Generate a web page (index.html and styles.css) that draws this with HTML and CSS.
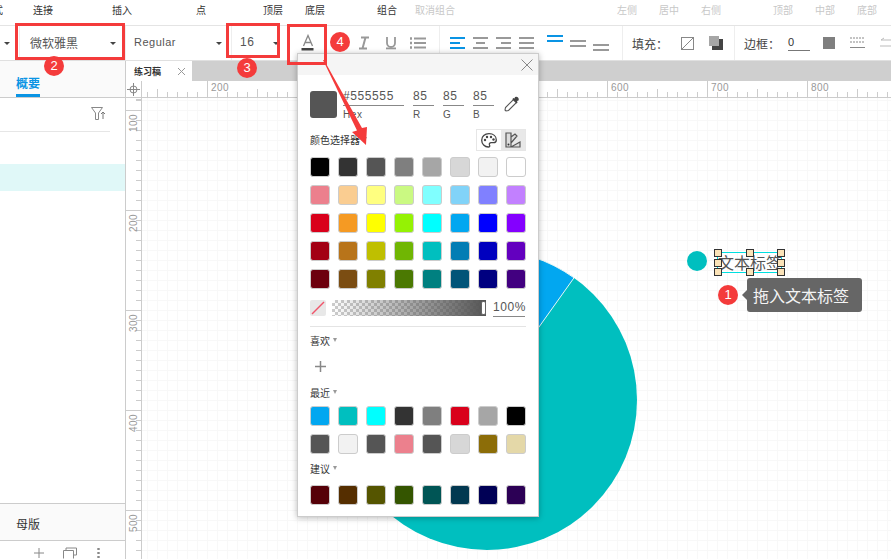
FILE: index.html
```html
<!DOCTYPE html>
<html lang="zh-CN">
<head>
  <meta charset="UTF-8">
  <title>文本标签</title>
  <meta name="viewport" content="width=device-width, initial-scale=1.0">
  <link rel="stylesheet" href="styles.css">
</head>
<body>
<div class="app">

  <div class="menu-row">
    <span class="menu-item w-cut">式</span>
    <span class="menu-item m-33">连接</span>
    <span class="menu-item m-59">插入</span>
    <span class="menu-item m-64">点</span>
    <span class="menu-item m-57">顶层</span>
    <span class="menu-item m-22">底层</span>
    <span class="menu-item m-52">组合</span>
    <span class="menu-item m-18 off">取消组合</span>
    <span class="menu-item m-162 off">左侧</span>
    <span class="menu-item m-22 off">居中</span>
    <span class="menu-item m-22 off">右侧</span>
    <span class="menu-item m-52 off">顶部</span>
    <span class="menu-item m-22 off">中部</span>
    <span class="menu-item m-22 off">底部</span>
  </div>

  <div class="format-row">
    <div class="select sel-first"><i class="caret"></i></div>
    <div class="select sel-font"><span>微软雅黑</span><i class="caret"></i></div>
    <div class="select sel-weight"><span>Regular</span><i class="caret"></i></div>
    <div class="select sel-size"><span>16</span><i class="caret"></i></div>
    <div class="text-tools">
      <svg class="ico" width="16" height="18" viewBox="0 0 16 18"><path d="M3.5 12 8 1.5 12.500 12M5 8.500h6" fill="none" stroke="#888" stroke-width="1.300"/><rect x="1.500" y="14" width="12" height="2.500" fill="#444"/></svg>
      <svg class="ico" width="14" height="14" viewBox="0 0 14 14"><path d="M3 1h5a3 3 0 0 1 0 6H3zM3 7h6a3 3 0 0 1 0 6H3z" fill="#999"/></svg>
      <svg class="ico" width="12" height="14" viewBox="0 0 12 14"><path d="M3 1.500h8M1 12.500h8M7.500 1.500l-3 11" fill="none" stroke="#999" stroke-width="2"/></svg>
      <svg class="ico" width="14" height="14" viewBox="0 0 14 14"><path d="M3 1v6a4 4 0 0 0 8 0V1" fill="none" stroke="#999" stroke-width="1.800"/><rect x="2" y="11.500" width="10" height="1.800" fill="#999"/></svg>
      <svg class="ico" width="17" height="14" viewBox="0 0 17 14"><path d="M5 2.500h12M5 7h12M5 11.500h12" stroke="#999" stroke-width="1.800"/><path d="M1 2.500h2M1 7h2M1 11.500h2" stroke="#999" stroke-width="2.400"/></svg>
    </div>
    <div class="align-tools">
      <svg width="15" height="12" viewBox="0 0 15 12"><path d="M0 1h15M0 6h10M0 11h15" stroke="#0a94e4" stroke-width="2"/></svg>
      <svg width="15" height="12" viewBox="0 0 15 12"><path d="M0 1h15M3 6h9M0 11h15" stroke="#999" stroke-width="2"/></svg>
      <svg width="15" height="12" viewBox="0 0 15 12"><path d="M0 1h15M5 6h10M0 11h15" stroke="#999" stroke-width="2"/></svg>
      <svg width="15" height="12" viewBox="0 0 15 12"><path d="M0 1h15M0 6h15M0 11h15" stroke="#999" stroke-width="2"/></svg>
    </div>
    <div class="valign-tools">
      <svg class="v-top" width="16" height="7" viewBox="0 0 16 7"><path d="M0 1h16M0 6h16" stroke="#0a94e4" stroke-width="2"/></svg>
      <svg class="v-mid" width="16" height="7" viewBox="0 0 16 7"><path d="M0 1h16M0 6h16" stroke="#999" stroke-width="2"/></svg>
      <svg class="v-bot" width="16" height="7" viewBox="0 0 16 7"><path d="M0 1h16M0 6h16" stroke="#999" stroke-width="2"/></svg>
    </div>
    <div class="fill-tools">
      <span class="tool-label">填充：</span>
      <svg class="fill-none" width="13" height="13" viewBox="0 0 13 13"><rect x=".5" y=".5" width="12" height="12" fill="#fff" stroke="#888"/><path d="M1 12 12 1" stroke="#888"/></svg>
      <svg class="fill-shadow" width="14" height="14" viewBox="0 0 14 14"><rect x="3" y="3" width="11" height="11" fill="#444"/><rect width="10" height="10" fill="#a6a6a6"/></svg>
    </div>
    <div class="border-tools">
      <span class="tool-label">边框：</span>
      <span class="border-num">0</span>
      <span class="border-swatch"></span>
      <svg class="border-dash" width="15" height="12" viewBox="0 0 15 12"><path d="M0 1h15M0 5h15" stroke="#888" stroke-dasharray="2 1"/><path d="M0 10.500h15" stroke="#888"/></svg>
      <svg class="border-arrow" width="15" height="12" viewBox="0 0 15 12"><path d="M15 3H1l3-2M0 9h14l-3 2" fill="none" stroke="#bbb"/></svg>
    </div>
  </div>

  <div class="work">
    <aside class="side">
      <div class="side-tabs"><span class="side-tab">概要</span></div>
      <div class="side-filter">
        <svg width="15" height="13" viewBox="0 0 15 13"><path d="M.5.500h11L7.500 6v6.500h-3V6z" fill="none" stroke="#888"/><path d="M12 12V5M10 7l2-2 2 2" fill="none" stroke="#777"/></svg>
      </div>
      <div class="side-selected"></div>
      <div class="side-spacer"></div>
      <div class="side-master">母版</div>
      <div class="side-foot">
        <svg width="10" height="10" viewBox="0 0 10 10"><path d="M5 0v10M0 5h10" stroke="#888"/></svg>
        <svg width="14" height="12" viewBox="0 0 14 12"><path d="M.5 11.500v-8h10v8M3 3V1h10.500v7H11" fill="none" stroke="#888"/></svg>
        <svg width="3" height="10" viewBox="0 0 3 10"><path d="M1.500 0v2M1.500 4v2M1.500 8v2" stroke="#888" stroke-width="2.400"/></svg>
      </div>
    </aside>

    <main class="stage">
      <div class="doc-tabs">
        <div class="doc-tab"><span>练习稿</span><svg width="9" height="9" viewBox="0 0 9 9"><path d="M1 1l7 7M8 1 1 8" stroke="#999"/></svg></div>
      </div>
      <div class="ruler-top">
        <div class="ruler-corner">
          <svg width="13" height="13" viewBox="0 0 13 13"><circle cx="6.500" cy="6.500" r="3.500" fill="none" stroke="#888"/><path d="M6.500 0v13M0 6.500h13" stroke="#888"/></svg>
        </div>
        <div class="ruler-x">
          <span>200</span><span></span><span></span><span></span><span>600</span><span>700</span><span>800</span>
        </div>
      </div>
      <div class="stage-body">
        <div class="ruler-y">
          <span><b>100</b></span><span><b>200</b></span><span><b>300</b></span><span><b>400</b></span><span><b>500</b></span>
        </div>
        <div class="canvas">
          <svg class="pie" width="300" height="300" viewBox="0 0 300 300">
            <circle cx="150" cy="150" r="150" fill="#00bfbf"/>
            <path d="M150 150V0A150 150 0 0 1 237 27.800Z" fill="#02a7f0" stroke="#e8f6f6"/>
          </svg>
          <span class="dot"></span>
          <div class="label-box">
            <span>文本标签</span>
            <i class="h h-tl"></i><i class="h h-tc"></i><i class="h h-tr"></i>
            <i class="h h-ml"></i><i class="h h-mr"></i>
            <i class="h h-bl"></i><i class="h h-bc"></i><i class="h h-br"></i>
          </div>
          <div class="tip">拖入文本标签</div>
        </div>
      </div>
    </main>
  </div>

  <div class="picker">
    <div class="picker-head">
      <svg width="12" height="12" viewBox="0 0 12 12"><path d="M.5.500l11 11M11.500.500l-11 11" stroke="#888"/></svg>
    </div>
    <div class="picker-body">
      <div class="value-row">
        <span class="current"></span>
        <div class="field f-hex"><span class="val">#555555</span><span class="cap">Hex</span></div>
        <div class="field"><span class="val">85</span><span class="cap">R</span></div>
        <div class="field"><span class="val">85</span><span class="cap">G</span></div>
        <div class="field"><span class="val">85</span><span class="cap">B</span></div>
        <svg class="dropper" width="18" height="18" viewBox="0 0 18 18"><path d="M9.500 5.500l3 3-8 8-2.500.5-1-1 .5-2.500z" fill="#fff" stroke="#555" stroke-width="1.100"/><path d="M8.500 5.500l4 4 1-1-.5-1.500 1.500-.5a2.600 2.600 0 0 0-3.500-3.500l-.5 1.500-1.500-.5z" fill="#444"/></svg>
      </div>

      <div class="title-row">
        <span class="sec-title">颜色选择器<i class="mini"></i></span>
        <div class="mode-switch">
          <span class="mode">
            <svg width="16" height="15" viewBox="0 0 16 15"><path d="M8 .700C3.700.700.700 3.500.700 7.200c0 3.800 3 6.800 6.600 6.800 1.500 0 1.700-1 1.200-2-.6-1.300.2-2.300 1.600-2.300h2.400c1.900 0 2.800-1.200 2.800-2.800C15.300 3.200 12.300.700 8 .700z" fill="none" stroke="#444" stroke-width="1.300"/><circle cx="4" cy="7" r="1.200" fill="#444"/><circle cx="6" cy="4" r="1.200" fill="#444"/><circle cx="10" cy="4" r="1.200" fill="#444"/><circle cx="12.500" cy="6.500" r="1.200" fill="#444"/></svg>
          </span>
          <span class="mode mode-on">
            <svg width="16" height="16" viewBox="0 0 16 16"><path d="M1 1h5v14H1zM6 5l4-3 2 2-6 7M6 15l9-5v5z" fill="#ddd" stroke="#555" stroke-width="1.200"/><circle cx="3.500" cy="12.500" r="1" fill="#333"/></svg>
          </span>
        </div>
      </div>

      <div class="swatches">
        <i class="s c-000"></i><i class="s c-333"></i><i class="s c-555"></i><i class="s c-7f7"></i><i class="s c-a6a"></i><i class="s c-d7d"></i><i class="s c-f2f"></i><i class="s c-fff"></i>
        <i class="s c-ec8"></i><i class="s c-fac"></i><i class="s c-ff8"></i><i class="s c-caf"></i><i class="s c-8ff"></i><i class="s c-81d"></i><i class="s c-88f"></i><i class="s c-c28"></i>
        <i class="s c-d90"></i><i class="s c-f59"></i><i class="s c-ff0"></i><i class="s c-95f"></i><i class="s c-0ff"></i><i class="s c-02a"></i><i class="s c-00f"></i><i class="s c-840"></i>
        <i class="s c-a30"></i><i class="s c-b87"></i><i class="s c-bfb"></i><i class="s c-70b"></i><i class="s c-0bf"></i><i class="s c-027"></i><i class="s c-00b"></i><i class="s c-630"></i>
        <i class="s c-6d0"></i><i class="s c-7b4"></i><i class="s c-808"></i><i class="s c-4b7"></i><i class="s c-008"></i><i class="s c-015"></i><i class="s c-000080"></i><i class="s c-420"></i>
      </div>

      <div class="alpha-row">
        <svg class="no-color" width="16" height="16" viewBox="0 0 16 16"><rect width="16" height="16" rx="2" fill="#e8e8e8"/><path d="M2 14 14 2" stroke="#f0556b" stroke-width="1.500"/></svg>
        <div class="alpha-bar"><i class="alpha-thumb"></i></div>
        <span class="alpha-val">100%</span>
      </div>

      <div class="divider"></div>

      <div class="sec-title t-fav">喜欢<i class="mini"></i></div>
      <svg class="add" width="11" height="11" viewBox="0 0 11 11"><path d="M5.500 0v11M0 5.500h11" stroke="#888" stroke-width="1.500"/></svg>

      <div class="sec-title t-recent">最近<i class="mini"></i></div>
      <div class="swatches">
        <i class="s c-02a"></i><i class="s c-0bf"></i><i class="s c-0ff"></i><i class="s c-333"></i><i class="s c-7f7"></i><i class="s c-d90"></i><i class="s c-a6a"></i><i class="s c-000"></i>
        <i class="s c-555"></i><i class="s c-f2f"></i><i class="s c-555"></i><i class="s c-ec8"></i><i class="s c-555"></i><i class="s c-d7d"></i><i class="s c-8f6"></i><i class="s c-e4d"></i>
      </div>

      <div class="sec-title t-suggest">建议<i class="mini"></i></div>
      <div class="swatches">
        <i class="s c-500"></i><i class="s c-552"></i><i class="s c-550"></i><i class="s c-350"></i><i class="s c-055"></i><i class="s c-035"></i><i class="s c-005"></i><i class="s c-305"></i>
      </div>
    </div>
  </div>

  <!-- tutorial marks drawn over the screenshot -->
  <div class="mark mark-font"></div>
  <div class="mark mark-size"></div>
  <div class="mark mark-color"></div>
  <svg class="arrow" width="50" height="92" viewBox="0 0 50 92"><path d="M3 5h1l38 68 5-1-1 18-14-13 5-1.400z" fill="#f43b3b"/></svg>
  <span class="badge b-1">1</span>
  <span class="badge b-2">2</span>
  <span class="badge b-3">3</span>
  <span class="badge b-4">4</span>
</div>
</body>
</html>
```

FILE: styles.css
```css
* {
  box-sizing: border-box;
}

html, body {
  margin: 0;
  background-color: #fff;
}

.app {
  position: relative;
  width: 891px;
  height: 559px;
  overflow: hidden;
  color: #333;
  font-family: "Noto Sans CJK SC", "Noto Sans", sans-serif;
  font-size: 12px;
}

/* top labels */
.menu-row {
  display: flex;
  align-items: center;
  height: 26px;
  padding-bottom: 6px;
  border-bottom: 1px solid #e4e4e4;
  font-size: 10px;
  white-space: nowrap;
}

.menu-item { flex: none; }
.off { color: #c8c8c8; }
.w-cut { width: 3px; overflow: hidden; direction: rtl; }
.m-18 { margin-left: 18px; }
.m-22 { margin-left: 22px; }
.m-33 { margin-left: 30px; }
.m-52 { margin-left: 52px; }
.m-57 { margin-left: 57px; }
.m-59 { margin-left: 59px; }
.m-64 { margin-left: 64px; }
.m-162 { margin-left: 162px; }

/* format bar */
.format-row {
  display: flex;
  align-items: center;
  height: 35px;
  border-bottom: 1px solid #e0e0e0;
}

.select {
  display: flex;
  flex: none;
  align-items: center;
  justify-content: space-between;
  height: 34px;
  color: #555;
}

.select span { margin-top: -2px; }

.sel-first { width: 20px; padding-left: 4px; border-right: 1px solid #eee; }
.sel-font { width: 105px; padding: 0 9px 0 10px; font-size: 12px; }
.sel-weight { width: 106px; padding: 0 9px 0 8px; border-left: 1px solid #eee; font-size: 11px; font-family: "Liberation Sans", sans-serif; letter-spacing: .5px; }
.sel-size { width: 54px; padding: 0 6px 0 8px; border-left: 1px solid #eee; font-size: 12px; font-family: "Liberation Sans", sans-serif; letter-spacing: .5px; }

.caret {
  width: 0;
  height: 0;
  border-top: 3px solid #444;
  border-right: 3px solid transparent;
  border-left: 3px solid transparent;
}

.text-tools {
  display: flex;
  flex: none;
  align-items: center;
  width: 155px;
  height: 34px;
  padding-left: 15px;
  border-right: 1px solid #eee;
}

.text-tools .ico { flex: none; margin-right: 14px; }
.text-tools .ico:nth-child(2) { margin-right: 14px; }
.text-tools .ico:nth-child(3) { margin-right: 14px; }
.text-tools .ico:nth-child(4) { margin-right: 11px; }

.align-tools {
  display: flex;
  flex: none;
  gap: 8px;
  width: 95px;
  padding-left: 10px;
}

.valign-tools {
  display: flex;
  flex: none;
  gap: 7px;
  align-items: center;
  width: 88px;
  height: 34px;
  padding-left: 12px;
  border-right: 1px solid #eee;
}

.v-top { margin-top: -9px; }
.v-mid { margin-top: 0; }
.v-bot { margin-top: 9px; }

.fill-tools {
  display: flex;
  flex: none;
  align-items: center;
  width: 112px;
  height: 34px;
  padding-left: 9px;
  border-right: 1px solid #eee;
}

.tool-label { flex: none; font-size: 12px; color: #444; }
.fill-none { margin-left: 13px; }
.fill-shadow { margin-left: 15px; }

.border-tools {
  display: flex;
  flex: none;
  align-items: center;
  height: 34px;
  padding-left: 9px;
}

.border-num {
  width: 22px;
  margin-left: 8px;
  border-bottom: 1px solid #777;
  line-height: 15px;
  font-size: 11px;
  font-family: "Liberation Sans", sans-serif;
}

.border-swatch {
  width: 12px;
  height: 12px;
  margin-left: 13px;
  background-color: #7f7f7f;
}

.border-dash { margin-left: 15px; }
.border-arrow { margin-left: 15px; }

/* panels */
.work {
  display: flex;
  height: 498px;
}

.side {
  display: flex;
  flex: none;
  flex-direction: column;
  width: 126px;
  border-right: 1px solid #ccc;
}

.side-tabs {
  height: 37px;
  padding: 14px 0 0 16px;
  background-color: #fafafa;
  border-bottom: 1px solid #ccc;
}

.side-tab {
  display: block;
  width: 24px;
  height: 22px;
  border-bottom: 3px solid #0a94e4;
  color: #0a94e4;
  font-weight: 700;
  line-height: 15px;
}

.side-filter {
  display: flex;
  justify-content: flex-end;
  width: 110px;
  height: 34px;
  padding: 9px 4px 0 0;
  border-bottom: 1px solid #e6e6e6;
}

.side-selected {
  height: 27px;
  margin-top: 32px;
  background-color: #e0f8f8;
}

.side-spacer { flex: 1; }

.side-master {
  height: 38px;
  padding-left: 16px;
  background-color: #fafafa;
  border-top: 1px solid #ccc;
  border-bottom: 1px solid #ccc;
  line-height: 40px;
}

.side-foot {
  display: flex;
  flex: none;
  align-items: center;
  height: 18px;
  padding: 6px 0 0 34px;
}

.side-foot svg:nth-child(2) { margin-left: 19px; }
.side-foot svg:nth-child(3) { margin-left: 20px; }

.stage {
  display: flex;
  flex: 1;
  flex-direction: column;
  min-width: 0;
}

.doc-tabs {
  flex: none;
  height: 20px;
  background-color: #cfcfcf;
}

.doc-tab {
  display: flex;
  align-items: center;
  justify-content: space-between;
  width: 66px;
  height: 20px;
  padding: 0 6px 0 8px;
  background-color: #fff;
  font-size: 9px;
  font-weight: 700;
}

.ruler-top {
  display: flex;
  flex: none;
  height: 17px;
  border-bottom: 1px solid #ccc;
}

.ruler-corner {
  display: flex;
  flex: none;
  align-items: center;
  justify-content: center;
  width: 16px;
  border-right: 1px solid #ccc;
}

.ruler-x {
  display: flex;
  flex: 1;
  padding-left: 65px;
  background-image:
    repeating-linear-gradient(90deg, #ccc 0, #ccc 1px, transparent 1px, transparent 50px),
    repeating-linear-gradient(90deg, #ccc 0, #ccc 1px, transparent 1px, transparent 10px);
  background-position: 15px 100%, 5px 100%;
  background-repeat: repeat-x;
  background-size: 100% 8px, 100% 5px;
  overflow: hidden;
}

.ruler-x span {
  flex: none;
  width: 100px;
  padding-left: 3px;
  border-left: 1px solid #ccc;
  color: #999;
  font-family: "Liberation Sans", sans-serif;
  font-size: 10px;
  letter-spacing: .4px;
  line-height: 13px;
}

.stage-body {
  display: flex;
  flex: 1;
  min-height: 0;
}

.ruler-y {
  display: flex;
  flex: none;
  flex-direction: column;
  width: 16px;
  padding-top: 12px;
  border-right: 1px solid #ccc;
  background-image:
    repeating-linear-gradient(180deg, #ccc 0, #ccc 1px, transparent 1px, transparent 10px);
  background-position: 100% 2px;
  background-repeat: repeat-y;
  background-size: 5px 100%;
  overflow: hidden;
}

.ruler-y span {
  display: block;
  flex: none;
  height: 100px;
  border-top: 1px solid #ccc;
}

.ruler-y b {
  display: block;
  margin: 3px 0 0 3px;
  color: #999;
  font-family: "Liberation Sans", sans-serif;
  font-size: 10px;
  font-weight: 400;
  letter-spacing: .4px;
  line-height: 10px;
  transform: rotate(180deg);
  writing-mode: vertical-rl;
}

.canvas {
  position: relative;
  flex: 1;
  overflow: hidden;
  background-color: #fff;
  background-image:
    linear-gradient(90deg, #f8f8f8 1px, transparent 1px),
    linear-gradient(180deg, #f8f8f8 1px, transparent 1px);
  background-position: 5px 2px;
  background-size: 10px 10px;
}

.pie {
  position: absolute;
  top: 152px;
  left: 195px;
}

.dot {
  position: absolute;
  top: 153px;
  left: 545px;
  width: 20px;
  height: 20px;
  border-radius: 50%;
  background-color: #00bfbf;
}

.label-box {
  position: absolute;
  top: 154px;
  left: 575px;
  width: 65px;
  height: 21px;
  border: 1px solid #00dfe0;
  color: #555;
  font-size: 16px;
  line-height: 19px;
  text-align: center;
  white-space: nowrap;
}

.h {
  position: absolute;
  width: 8px;
  height: 8px;
  background-color: #fbe3b8;
  border: 1px solid #333;
}

.h-tl { top: -4px; left: -4px; }
.h-tc { top: -4px; left: 28px; }
.h-tr { top: -4px; right: -4px; }
.h-ml { top: 6px; left: -4px; }
.h-mr { top: 6px; right: -4px; }
.h-bl { bottom: -4px; left: -4px; }
.h-bc { bottom: -4px; left: 28px; }
.h-br { bottom: -4px; right: -4px; }

.tip {
  position: absolute;
  top: 180px;
  left: 605px;
  width: 115px;
  height: 34px;
  padding-left: 6px;
  border-radius: 3px;
  background-color: #666;
  color: #f4f4f4;
  font-size: 16px;
  line-height: 34px;
}

.tip::before {
  content: "";
  position: absolute;
  top: 12px;
  left: -5px;
  border-top: 5px solid transparent;
  border-right: 5px solid #666;
  border-bottom: 5px solid transparent;
}

/* colour picker */
.picker {
  position: absolute;
  top: 53px;
  left: 297px;
  width: 242px;
  height: 464px;
  background-color: #fff;
  border: 1px solid #ccc;
  box-shadow: 0 1px 6px rgba(0, 0, 0, .28);
}

.picker-head {
  display: flex;
  align-items: center;
  justify-content: flex-end;
  height: 21px;
  padding-right: 5px;
  background-color: #f5f5f5;
}

.picker-body {
  padding: 16px 12px 0;
}

.value-row {
  display: flex;
  height: 40px;
}

.current {
  flex: none;
  width: 27px;
  height: 27px;
  border-radius: 3px;
  background-color: #555;
}

.field {
  display: flex;
  flex: none;
  flex-direction: column;
  width: 21px;
  margin-left: 9px;
  color: #555;
  font-family: "Liberation Sans", sans-serif;
  font-size: 12px;
  letter-spacing: .6px;
}

.field.f-hex { width: 61px; margin-left: 6px; }
.f-hex + .field { margin-left: 9px; }

.val {
  height: 15px;
  border-bottom: 1px solid #888;
  line-height: 10px;
}

.cap {
  margin-top: 2px;
  font-size: 10px;
  line-height: 13px;
}

.dropper { flex: none; margin: 3px 0 0 10px; }

.title-row {
  display: flex;
  align-items: center;
  justify-content: space-between;
  height: 22px;
  margin-top: -2px;
}

.sec-title {
  display: block;
  color: #333;
  font-size: 10px;
  line-height: 14px;
}

.mini {
  display: inline-block;
  margin-left: 3px;
  vertical-align: 3px;
  border-top: 4px solid #999;
  border-right: 2.500px solid transparent;
  border-left: 2.500px solid transparent;
}

.mode-switch {
  display: flex;
  width: 50px;
  height: 22px;
  border: 1px solid #e6e6e6;
}

.mode {
  display: flex;
  flex: 1;
  align-items: center;
  justify-content: center;
}

.mode-on { background-color: #e8e8e8; }

.swatches {
  display: grid;
  grid-template-columns: repeat(8, 20px);
  gap: 8px;
}

.title-row + .swatches { margin-top: 6px; }

.s {
  display: block;
  height: 20px;
  border: 1px solid #ccc;
  border-radius: 3px;
}

.c-000 { background-color: #000; }
.c-333 { background-color: #333; }
.c-555 { background-color: #555; }
.c-7f7 { background-color: #7f7f7f; }
.c-a6a { background-color: #a6a6a6; }
.c-d7d { background-color: #d7d7d7; }
.c-f2f { background-color: #f2f2f2; }
.c-fff { background-color: #fff; }
.c-ec8 { background-color: #ec808d; }
.c-fac { background-color: #facd91; }
.c-ff8 { background-color: #ffff80; }
.c-caf { background-color: #caf982; }
.c-8ff { background-color: #80ffff; }
.c-81d { background-color: #81d3f8; }
.c-88f { background-color: #8080ff; }
.c-c28 { background-color: #c280ff; }
.c-d90 { background-color: #d9001b; }
.c-f59 { background-color: #f59a23; }
.c-ff0 { background-color: #ff0; }
.c-95f { background-color: #95f204; }
.c-0ff { background-color: #0ff; }
.c-02a { background-color: #02a7f0; }
.c-00f { background-color: #00f; }
.c-840 { background-color: #8400ff; }
.c-a30 { background-color: #a30014; }
.c-b87 { background-color: #b8741a; }
.c-bfb { background-color: #bfbf00; }
.c-70b { background-color: #70b603; }
.c-0bf { background-color: #00bfbf; }
.c-027 { background-color: #027db4; }
.c-00b { background-color: #0000bf; }
.c-630 { background-color: #6300bf; }
.c-6d0 { background-color: #6d000e; }
.c-7b4 { background-color: #7b4d12; }
.c-808 { background-color: #808000; }
.c-4b7 { background-color: #4b7902; }
.c-008 { background-color: #008080; }
.c-015 { background-color: #015478; }
.c-000080 { background-color: #000080; }
.c-420 { background-color: #420080; }
.c-8f6 { background-color: #8c6d08; }
.c-e4d { background-color: #e4d8a8; }
.c-500 { background-color: #550008; }
.c-552 { background-color: #552e00; }
.c-550 { background-color: #555500; }
.c-350 { background-color: #345500; }
.c-055 { background-color: #005555; }
.c-035 { background-color: #023850; }
.c-005 { background-color: #000055; }
.c-305 { background-color: #2c0055; }

.alpha-row {
  display: flex;
  align-items: center;
  height: 20px;
  margin-top: 9px;
}

.no-color { flex: none; }

.alpha-bar {
  position: relative;
  flex: none;
  width: 154px;
  height: 16px;
  margin-left: 6px;
  background-color: #fff;
  background-image:
    linear-gradient(90deg, rgba(85, 85, 85, 0), #555),
    repeating-conic-gradient(#ccc 0 25%, #fff 0 50%);
  background-size: 100% 100%, 6px 6px;
}

.alpha-thumb {
  position: absolute;
  top: 1px;
  right: 0;
  width: 5px;
  height: 14px;
  border: 1px solid #666;
  border-radius: 2px;
  background-color: #fff;
}

.alpha-val {
  flex: none;
  width: 32px;
  margin-left: 7px;
  border-bottom: 1px solid #888;
  color: #555;
  font-family: "Liberation Sans", sans-serif;
  font-size: 12px;
  letter-spacing: .6px;
  line-height: 17px;
}

.divider {
  height: 1px;
  margin-top: 8px;
  background-color: #e4e4e4;
}

.t-fav { margin-top: 7px; }

.add {
  display: block;
  margin: 13px 0 0 5px;
}

.t-recent { margin-top: 14px; margin-bottom: 6px; }
.t-suggest { margin-top: 8px; margin-bottom: 9px; }

/* tutorial marks */
.mark {
  position: absolute;
  border: 3px solid #f43b3b;
  pointer-events: none;
}

.mark-font { top: 23px; left: 15px; width: 110px; height: 37px; }
.mark-size { top: 23px; left: 226px; width: 54px; height: 35px; }
.mark-color { top: 24px; left: 287px; width: 40px; height: 41px; }

.arrow {
  position: absolute;
  top: 55px;
  left: 320px;
}

.badge {
  position: absolute;
  width: 20px;
  height: 20px;
  border-radius: 50%;
  background-color: #f43b3b;
  color: #fff;
  font-family: "Liberation Sans", sans-serif;
  font-size: 13px;
  line-height: 20px;
  text-align: center;
}

.b-1 { top: 285px; left: 718px; }
.b-2 { top: 56px; left: 44px; }
.b-3 { top: 58px; left: 237px; }
.b-4 { top: 32px; left: 330px; }
```
